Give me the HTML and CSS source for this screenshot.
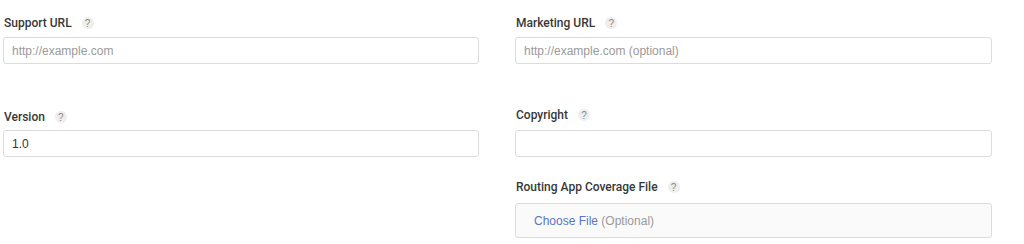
FILE: index.html
```html
<!DOCTYPE html>
<html lang="en">
<head>
  <meta charset="UTF-8" />
  <title>App Information</title>
  <link rel="stylesheet" href="styles.css">
</head>
<body>
  <div class="form">
    <div class="col">
      <div class="field">
        <label class="label">Support URL <span class="help">?</span></label>
        <input class="text" type="text" placeholder="http://example.com" />
      </div>
      <div class="field field-version">
        <label class="label">Version <span class="help">?</span></label>
        <input class="text" type="text" value="1.0" />
      </div>
    </div>
    <div class="col">
      <div class="field">
        <label class="label">Marketing URL <span class="help">?</span></label>
        <input class="text" type="text" placeholder="http://example.com (optional)" />
      </div>
      <div class="field field-copyright">
        <label class="label">Copyright <span class="help">?</span></label>
        <input class="text" type="text" />
      </div>
      <div class="field field-routing">
        <label class="label">Routing App Coverage File <span class="help">?</span></label>
        <div class="file"><span class="choose">Choose File</span> (Optional)</div>
      </div>
    </div>
  </div>
</body>
</html>
```

FILE: styles.css
```css
body {
  margin: 0;
  font-family: "Liberation Sans", Arial, sans-serif;
  background: #fff;
  color: #333;
}
.form {
  display: grid;
  grid-template-columns: 476px 477px;
  column-gap: 36px;
  padding: 15px 0 0 3px;
}
.col {
  display: flex;
  flex-direction: column;
}
.field {
  display: flex;
  flex-direction: column;
}
.label {
  display: flex;
  align-items: center;
  height: 16px;
  margin-bottom: 6px;
  padding-left: 1px;
  font-family: Roboto, "Liberation Sans", sans-serif;
  font-size: 12px;
  font-weight: 500;
  color: #383838;
}
.help {
  display: inline-flex;
  align-items: center;
  justify-content: center;
  width: 12px;
  height: 12px;
  margin-left: 10px;
  border-radius: 50%;
  background: #eeeeee;
  color: #888;
  font-family: "Liberation Sans", Arial, sans-serif;
  font-size: 10px;
  font-weight: normal;
}
.text {
  box-sizing: border-box;
  height: 27px;
  width: 100%;
  margin: 0;
  padding: 0 8px;
  border: 1px solid #dcdcdc;
  border-radius: 3px;
  font-family: inherit;
  font-size: 12px;
  color: #333;
  outline: none;
}
.text::placeholder {
  color: #9a9a9a;
}
.field-version {
  margin-top: 45px;
}
.field-version .label {
  margin-bottom: 5px;
}
.field-copyright {
  margin-top: 43px;
}
.field-copyright .label {
  margin-bottom: 7px;
}
.field-routing {
  margin-top: 22px;
}
.field-routing .label {
  margin-bottom: 8px;
}
.file {
  box-sizing: border-box;
  height: 35px;
  display: flex;
  align-items: center;
  padding-left: 18px;
  border: 1px solid #dcdcdc;
  border-radius: 3px;
  background: #fafafa;
  font-size: 12px;
  color: #999;
  white-space: pre;
}
.choose {
  color: #5b74c4;
}
```
